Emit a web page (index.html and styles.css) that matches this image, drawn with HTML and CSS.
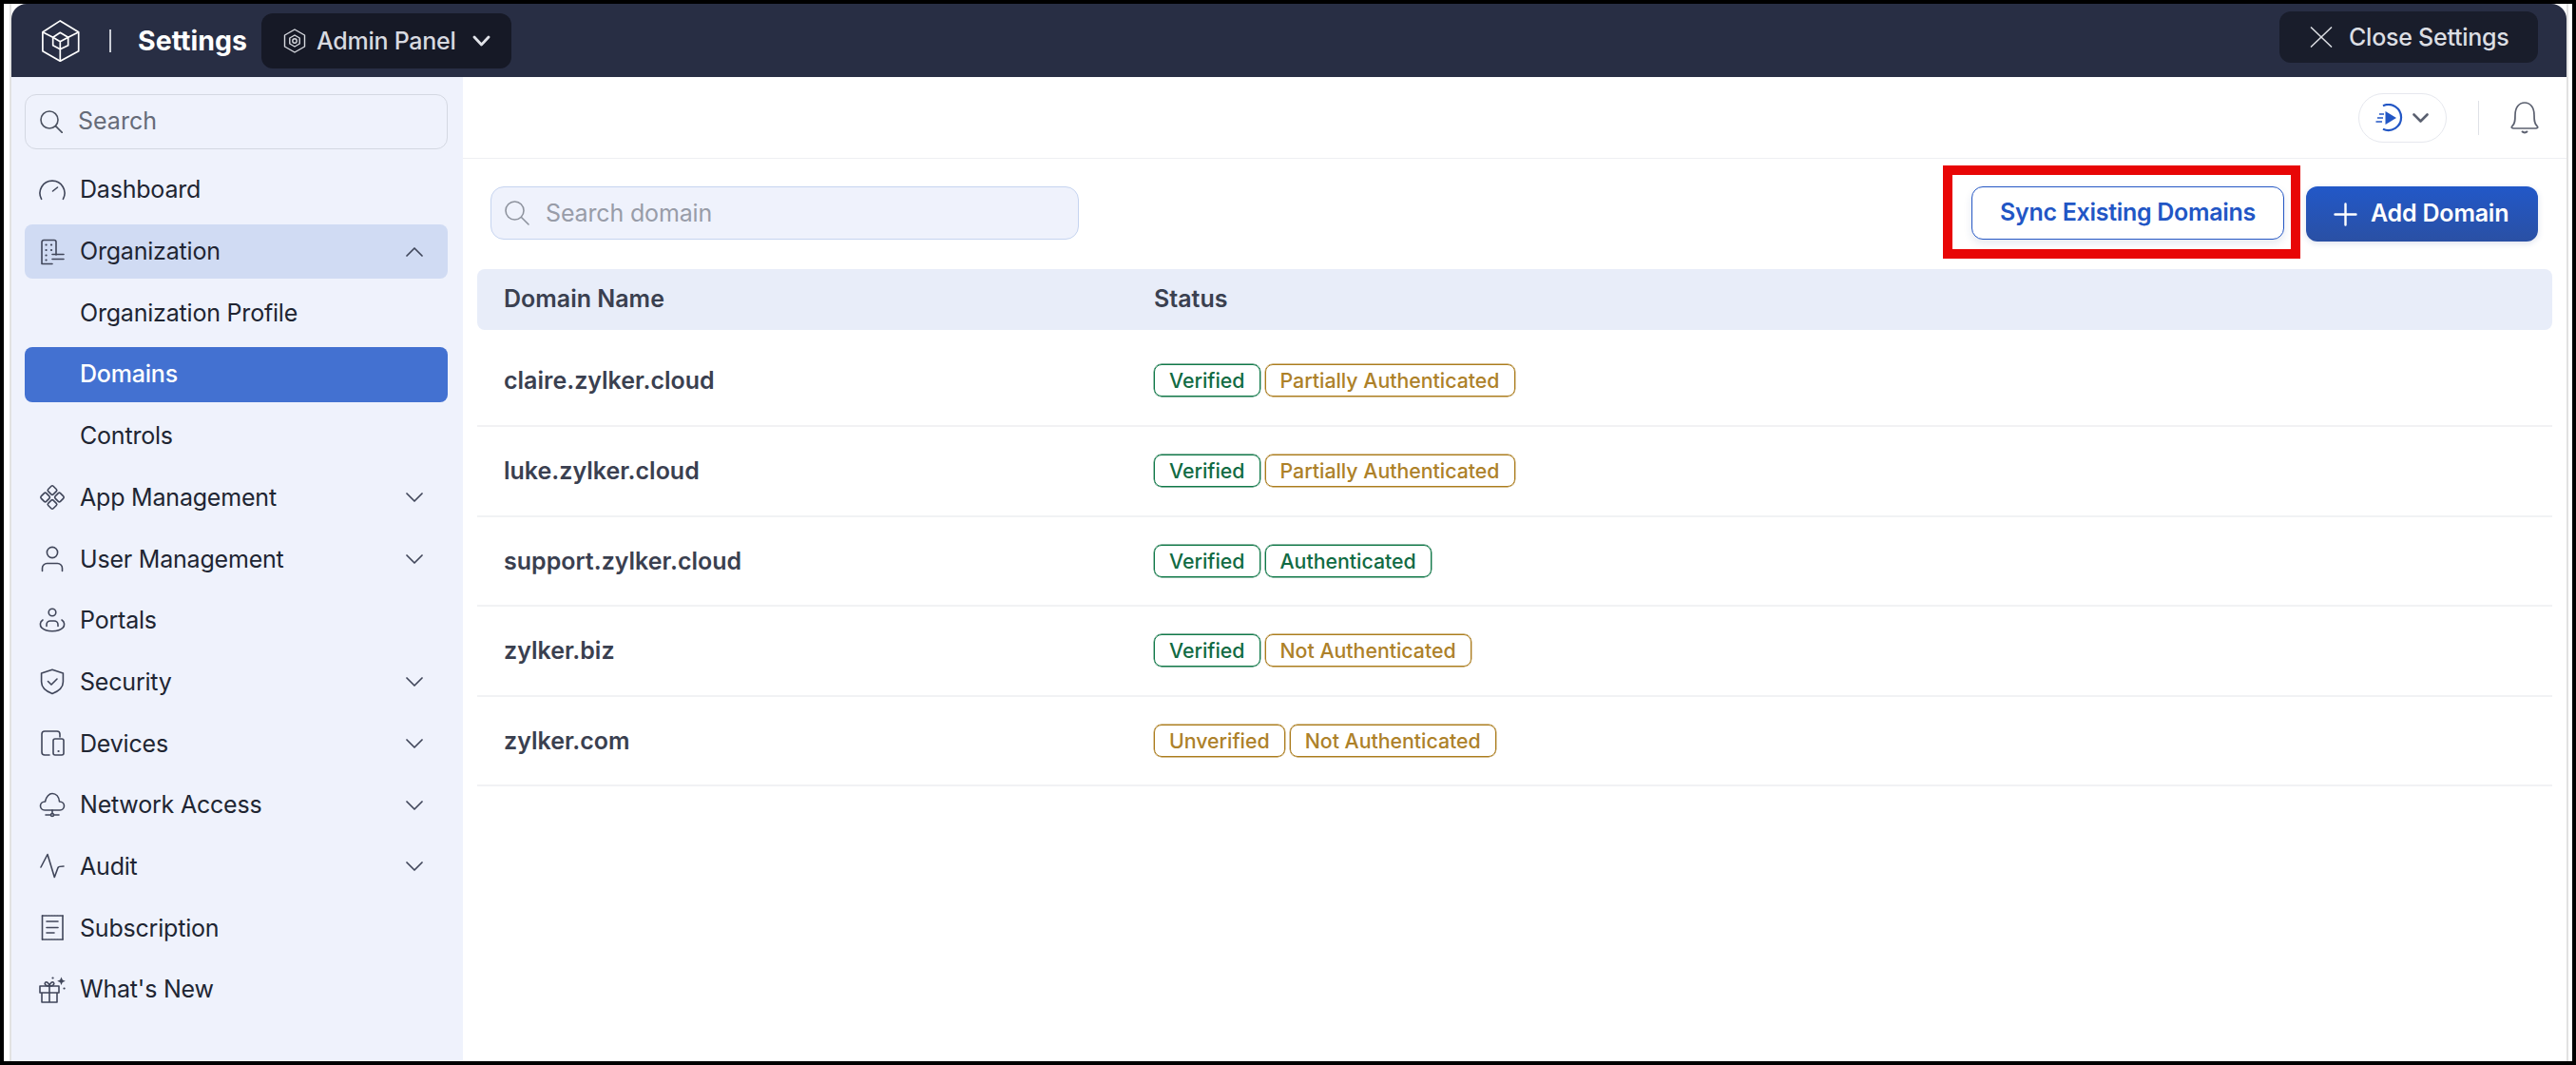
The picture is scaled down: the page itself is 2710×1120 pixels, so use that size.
FILE: index.html
```html
<!DOCTYPE html>
<html lang="en">
<head>
<meta charset="utf-8">
<title>Settings - Domains</title>
<link rel="stylesheet" href="styles.css">
</head>
<body>
<div class="frame">
  <div class="app">
    <header class="header">
      <svg class="logo" width="40" height="44" viewBox="0 0 40 44" fill="none" stroke="#fff" stroke-width="1.7" stroke-linejoin="round">
        <path d="M19.3 .9 38.7 12.7V32.7L19.3 43.3 .9 32.7V12.7Z"/>
        <path d="M19.3 13.3 27.7 18.3V26.7L19.3 30.7 11.7 26.7V18.3Z"/>
        <path d="M11.7 18.3 19.3 22.7 27.7 18.3M19.3 22.7V30.7M.9 12.7 11.7 18.3M38.7 12.7 27.7 18.3M19.3 43.3V30.7"/>
      </svg>
      <span class="head-divider"></span>
      <span class="head-title">Settings</span>
      <div class="panel-pill">
        <svg width="24" height="26" viewBox="0 0 24 26" fill="none" stroke="#d8dae0" stroke-width="1.4" stroke-linejoin="round">
          <path d="M12 1 22.5 7V19L12 25 1.5 19V7Z"/>
          <path d="M12 7 17.2 10V16L12 19 6.8 16V10Z"/>
          <circle cx="12" cy="13" r="2.2"/>
        </svg>
        <span>Admin Panel</span>
        <svg class="panel-chevron" width="19" height="12" viewBox="0 0 19 12" fill="none" stroke="#e0e2e8" stroke-width="2.8" stroke-linecap="round" stroke-linejoin="round"><path d="M2 2 9.5 10 17 2"/></svg>
      </div>
      <div class="close-pill">
        <svg width="24" height="22" viewBox="0 0 24 22" fill="none" stroke="#dcdee3" stroke-width="1.5"><path d="M1 .5 23 21.5M23 .5 1 21.5"/></svg>
        <span>Close Settings</span>
      </div>
    </header>
    <div class="body">
      <aside class="sidebar">
        <div class="side-search">
          <svg width="24" height="24" viewBox="0 0 24 24" fill="none" stroke="#4b5160" stroke-width="1.6" stroke-linecap="round"><circle cx="10" cy="10" r="9"/><path d="M16.6 16.6 23.3 23.4"/></svg>
          <span>Search</span>
        </div>
        <nav class="nav">
          <div class="nav-item">
            <svg class="ico" viewBox="0 0 28 28"><path d="M2.6 23.4A13 13 0 1 1 25.4 23.4"/><path d="M14.5 15 19.5 11"/></svg>
            <span>Dashboard</span>
          </div>
          <div class="nav-item is-open">
            <svg class="ico" viewBox="0 0 28 28"><path d="M3 26.5V3.5A2 2 0 0 1 5 1.5H16A2 2 0 0 1 18 3.5V17M3 26.5H14"/><path d="M14 17.5H26M14 22.5H26" transform="translate(0 -1)"/><path class="dot" d="M7.5 6.5h.1M13 6.5h.1M7.5 12h.1M13 12h.1M7.5 17.5h.1M7.5 22.5h.1"/></svg>
            <span>Organization</span>
            <svg class="chev" width="18" height="10" viewBox="0 0 18 10"><path d="M1 9 9 1 17 9"/></svg>
          </div>
          <div class="nav-item sub"><span>Organization Profile</span></div>
          <div class="nav-item sub is-active"><span>Domains</span></div>
          <div class="nav-item sub"><span>Controls</span></div>
          <div class="nav-item">
            <svg class="ico" viewBox="0 0 28 28"><rect x="10.2" y="2.8" width="7.6" height="7.6" rx="1.5" transform="rotate(45 14 6.6)"/><rect x="10.2" y="17.6" width="7.6" height="7.6" rx="1.5" transform="rotate(45 14 21.4)"/><rect x="2.8" y="10.2" width="7.6" height="7.6" rx="1.5" transform="rotate(45 6.6 14)"/><rect x="17.6" y="10.2" width="7.6" height="7.6" rx="1.5" transform="rotate(45 21.4 14)"/></svg>
            <span>App Management</span>
            <svg class="chev" width="18" height="10" viewBox="0 0 18 10"><path d="M1 1 9 9 17 1"/></svg>
          </div>
          <div class="nav-item">
            <svg class="ico" viewBox="0 0 28 28"><circle cx="14" cy="7" r="5.6"/><path d="M3.5 26.5V23.5A5 5 0 0 1 8.5 18.5H19.5A5 5 0 0 1 24.5 23.5V26.5"/></svg>
            <span>User Management</span>
            <svg class="chev" width="18" height="10" viewBox="0 0 18 10"><path d="M1 1 9 9 17 1"/></svg>
          </div>
          <div class="nav-item">
            <svg class="ico" viewBox="0 0 28 28"><circle cx="14" cy="5" r="3.8"/><path d="M4 13C.8 15 .6 19 3 21.3 7 25.8 21 25.8 25 21.3 27.4 19 27.2 15 24 13"/><path d="M8 19.5V18A4 4 0 0 1 12 14H16A4 4 0 0 1 20 18V19.5"/></svg>
            <span>Portals</span>
          </div>
          <div class="nav-item">
            <svg class="ico" viewBox="0 0 28 28"><path d="M14 1.2 25.4 5V14C25.4 20 20 24.2 14 26.4 8 24.2 2.6 20 2.6 14V5Z"/><path d="M9.5 13.5 13 17 19 11"/></svg>
            <span>Security</span>
            <svg class="chev" width="18" height="10" viewBox="0 0 18 10"><path d="M1 1 9 9 17 1"/></svg>
          </div>
          <div class="nav-item">
            <svg class="ico" viewBox="0 0 28 28"><path d="M22 7V4A3 3 0 0 0 19 1H6A3 3 0 0 0 3 4V23A3 3 0 0 0 6 26H11"/><rect x="15" y="9" width="11" height="17" rx="2"/><path class="dot" d="M20.5 22h.1"/></svg>
            <span>Devices</span>
            <svg class="chev" width="18" height="10" viewBox="0 0 18 10"><path d="M1 1 9 9 17 1"/></svg>
          </div>
          <div class="nav-item">
            <svg class="ico" viewBox="0 0 28 28"><path d="M22 19H6C3 19 1.5 16.5 1.5 14.5 1.5 12 3.5 10 6.5 10 7.5 4.5 11 1.5 14 1.5 18 1.5 21 5 21.5 10 24.5 10 26.5 12 26.5 14.5 26.5 16.5 25 19 22 19Z"/><path d="M14 19V22.5M7 24H12.5M15.5 24H21"/><circle cx="14" cy="24" r="1.5"/></svg>
            <span>Network Access</span>
            <svg class="chev" width="18" height="10" viewBox="0 0 18 10"><path d="M1 1 9 9 17 1"/></svg>
          </div>
          <div class="nav-item">
            <svg class="ico" viewBox="0 0 28 28"><path d="M2 15 9 1.5 16.3 25.5 20 15.5Q20.8 14 26 14"/></svg>
            <span>Audit</span>
            <svg class="chev" width="18" height="10" viewBox="0 0 18 10"><path d="M1 1 9 9 17 1"/></svg>
          </div>
          <div class="nav-item">
            <svg class="ico" viewBox="0 0 28 28"><path d="M3.5 1V26M25 1V26"/><path stroke-dasharray="2 1" d="M3.5 1H25M3.5 26H25"/><path d="M8 7H20M8 13.5H20M8 19H16"/></svg>
            <span>Subscription</span>
          </div>
          <div class="nav-item">
            <svg class="ico" viewBox="0 0 28 28"><path d="M1 10H21V17H1ZM3 17V27H19V17M11 10V27"/><path d="M11 10C7 10 5.5 8 6.5 6.5 8 4.5 10.5 7 11 10 11.5 7 14 4.5 15.5 6.5 16.5 8 15 10 11 10Z"/><path class="star" d="M23.5 .5 24.8 3.5 27.8 4.8 24.8 6.1 23.5 9.1 22.2 6.1 19.2 4.8 22.2 3.5Z"/><path class="dot" d="M14.5 1.5h.1M26.5 12.5h.1"/></svg>
            <span>What's New</span>
          </div>
        </nav>
      </aside>
      <main class="main">
        <div class="topbar">
          <div class="play-pill">
            <svg width="30" height="30" viewBox="0 0 30 30" fill="none" stroke="#2256c5" stroke-width="2.2"><path d="M8 2.2A13.5 13.5 0 1 1 8 26.8"/><path d="M4 11H9M2 15H8M.5 19H7" stroke-width="1.7"/><path d="M10.5 8 22 15 10.5 22Z" fill="#2256c5" stroke="none"/></svg>
            <svg width="17" height="10" viewBox="0 0 17 10" fill="none" stroke="#5a6070" stroke-width="2.6" stroke-linecap="round" stroke-linejoin="round"><path d="M1.5 1.5 8.5 8.5 15.5 1.5"/></svg>
          </div>
          <span class="top-divider"></span>
          <svg width="30" height="34" viewBox="0 0 30 34" fill="none" stroke="#5c6170" stroke-width="1.7" stroke-linejoin="round"><path d="M2 25.5C5 23 5 19 5 14 5 6 9 1 15 1 21 1 25 6 25 14 25 19 25 23 28 25.5 29.5 27 28.5 28 26.5 28H3.5C1.5 28 .5 27 2 25.5Z"/><path d="M12 31Q15 34 18 31" stroke-width="2"/></svg>
        </div>
        <div class="content">
          <div class="toolbar">
            <div class="domain-search">
              <svg width="26" height="26" viewBox="0 0 26 26" fill="none" stroke="#8e939e" stroke-width="1.6" stroke-linecap="round"><circle cx="10.5" cy="10.5" r="9.5"/><path d="M17.5 17.5 25 25"/></svg>
              <span>Search domain</span>
            </div>
            <div class="toolbar-actions">
              <div class="sync-wrap">
                <div class="btn-sync"><span>Sync Existing Domains</span></div>
                <div class="highlight"></div>
              </div>
              <div class="btn-add">
                <svg width="25" height="25" viewBox="0 0 25 25" fill="none" stroke="#fff" stroke-width="2.4" stroke-linecap="round"><path d="M12.5 1.5V23.5M1.5 12.5H23.5"/></svg>
                <span>Add Domain</span>
              </div>
            </div>
          </div>
          <div class="table">
            <div class="t-head"><span class="col-name">Domain Name</span><span class="col-status">Status</span></div>
            <div class="t-row first"><span class="col-name">claire.zylker.cloud</span><div class="chips"><span class="chip ok">Verified</span><span class="chip warn">Partially Authenticated</span></div></div>
            <div class="t-row"><span class="col-name">luke.zylker.cloud</span><div class="chips"><span class="chip ok">Verified</span><span class="chip warn">Partially Authenticated</span></div></div>
            <div class="t-row"><span class="col-name">support.zylker.cloud</span><div class="chips"><span class="chip ok">Verified</span><span class="chip ok">Authenticated</span></div></div>
            <div class="t-row"><span class="col-name">zylker.biz</span><div class="chips"><span class="chip ok">Verified</span><span class="chip warn">Not Authenticated</span></div></div>
            <div class="t-row"><span class="col-name">zylker.com</span><div class="chips"><span class="chip warn">Unverified</span><span class="chip warn">Not Authenticated</span></div></div>
          </div>
        </div>
      </main>
    </div>
  </div>
</div>
</body>
</html>
```
FILE: styles.css
```css
* { box-sizing: border-box; }
html, body { margin: 0; padding: 0; }
body { font-family: Inter, "Noto Sans", sans-serif; color: #202532; }

.frame { width: 2710px; height: 1120px; border: 4px solid #000; background: #fff; padding: 0 4px 0 6px; }
.app { height: 100%; border-left: 2px solid #e2e2e2; border-right: 2px solid #e2e2e2; display: flex; flex-direction: column; }

.header { height: 77px; flex: none; background: #282e44; border-radius: 16px 16px 0 0; display: flex; align-items: center; padding: 0 30px 0 32px; }
.logo { display: block; }
.head-divider { width: 2px; height: 24px; background: #c9ccd4; margin-left: 31px; }
.head-title { width: 115px; font-size: 28.5px; font-weight: 700; color: #fff; margin-left: 28px; white-space: nowrap; }
.panel-pill { margin-left: 15px; margin-top: 1px; height: 58px; width: 263px; background: #161926; border-radius: 12px; display: flex; align-items: center; padding-left: 23px; color: #d8dae0; font-size: 25px; font-weight: 500; }
.panel-pill span { margin-left: 11px; letter-spacing: -.25px; }
.panel-chevron { margin-left: 17px; }
.close-pill { margin-left: auto; margin-bottom: 7px; height: 54px; width: 272px; background: #191d2b; border-radius: 12px; display: flex; align-items: center; padding-left: 32px; color: #dcdee3; font-size: 25px; font-weight: 500; }
.close-pill span { margin-left: 17px; letter-spacing: -.25px; white-space: nowrap; }

.body { flex: 1; min-height: 0; display: flex; }
.sidebar { width: 475px; flex: none; background: #eff2fc; padding: 18px 16px 0 14px; }
.side-search { height: 58px; border: 1px solid #d4d8e2; border-radius: 12px; display: flex; align-items: center; padding-left: 15px; font-size: 25px; color: #666b78; }
.side-search span { margin-left: 16px; padding-bottom: 2px; }
.nav { margin-top: 14px; display: flex; flex-direction: column; gap: 6.9px; }
.nav-item { height: 57.8px; display: flex; align-items: center; padding: 0 26px 0 15px; border-radius: 8px; font-size: 25px; color: #202532; }
.nav-item span { margin-left: 15px; padding-bottom: 1px; letter-spacing: -.2px; white-space: nowrap; }
.nav-item.sub { padding-left: 43px; }
.nav-item.is-open { background: #d0dbf3; }
.nav-item.is-active { background: #4371d1; color: #fff; font-weight: 500; }
.ico { width: 28px; height: 28px; flex: none; fill: none; stroke: #40465a; stroke-width: 1.6; stroke-linecap: round; stroke-linejoin: round; }
.ico .dot { stroke-width: 2.2; }
.ico .star { fill: #40465a; stroke: none; }
.chev { margin-left: auto; flex: none; fill: none; stroke: #40465a; stroke-width: 1.7; stroke-linecap: round; stroke-linejoin: round; }

.main { flex: 1; min-width: 0; background: #fff; display: flex; flex-direction: column; }
.topbar { height: 86px; flex: none; border-bottom: 1px solid #eeeff2; display: flex; align-items: center; justify-content: flex-end; padding-right: 29px; }
.play-pill { width: 93px; height: 52px; border: 1px solid #e6e8ee; border-radius: 26px; display: flex; align-items: center; padding-left: 17px; gap: 9px; }
.top-divider { width: 1px; height: 36px; background: #dfe1e6; margin: 0 33px; }

.content { padding: 29px 15px 0; }
.toolbar { display: flex; justify-content: space-between; align-items: flex-start; margin: 0 15px 29px 14px; height: 58px; }
.domain-search { width: 619px; height: 56px; background: #eff2fc; border: 1px solid #c6d4f0; border-radius: 14px; display: flex; align-items: center; padding-left: 14px; font-size: 25px; color: #989ca8; }
.domain-search span { margin-left: 17px; letter-spacing: -.15px; }
.toolbar-actions { display: flex; gap: 23px; align-items: flex-start; }
.sync-wrap { position: relative; }
.btn-sync { width: 329px; height: 56px; border: 1.5px solid #2557c4; border-radius: 12px; background: #fff; color: #2256c5; font-size: 25px; font-weight: 600; display: flex; align-items: center; justify-content: center; letter-spacing: -.3px; box-shadow: 0 4px 8px rgba(40, 70, 140, .12); white-space: nowrap; }
.btn-sync span { padding-bottom: 2px; }
.highlight { position: absolute; top: -22px; left: -30px; right: -17px; bottom: -20px; border: 10px solid #e80606; pointer-events: none; }
.btn-add { width: 244px; height: 58px; border-radius: 12px; background: linear-gradient(#2258c8, #2a50a4); color: #fff; font-size: 25px; font-weight: 600; display: flex; align-items: center; padding-left: 29px; box-shadow: 0 2px 6px rgba(40, 70, 140, .15); }
.btn-add span { margin-left: 14px; padding-bottom: 3px; letter-spacing: -.2px; white-space: nowrap; }

.t-head { height: 64px; background: #e8edf9; border-radius: 8px; display: flex; align-items: center; padding-left: 28px; font-size: 25px; font-weight: 600; color: #3a4050; }
.t-head span { padding-bottom: 2px; }
.col-name { width: 684px; flex: none; }
.t-row { height: 94.5px; border-bottom: 2px solid #f1f2f4; display: flex; align-items: center; padding-left: 28px; font-size: 25px; font-weight: 600; color: #3a4050; }
.t-row.first { height: 102px; padding-top: 6px; }
.chips { display: flex; gap: 5px; }
.chip { height: 34px; border: 1px solid; border-radius: 8px; padding: 0 15px; display: flex; align-items: center; font-size: 21.3px; font-weight: 500; white-space: nowrap; box-shadow: 0 0 0 .4px currentColor; }
.chip.ok { color: #116b43; border-color: #0f7a48; }
.chip.warn { color: #ad8129; border-color: #ab7c1c; }
```
